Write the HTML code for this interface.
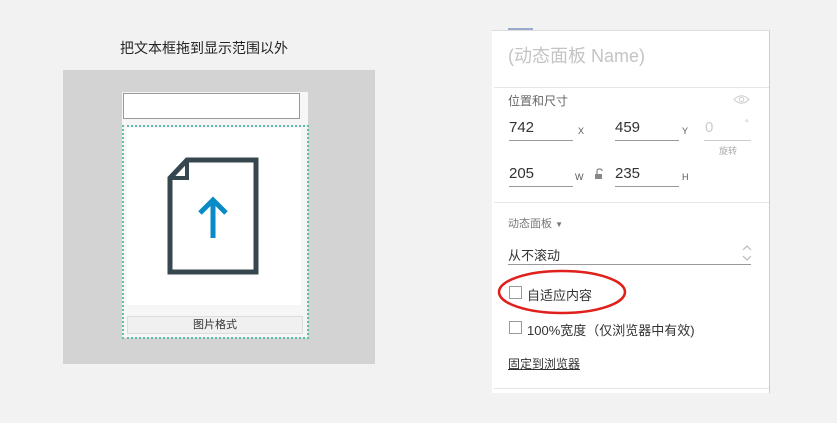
<!DOCTYPE html>
<html><head><meta charset="utf-8"><style>
body{margin:0;width:837px;height:423px;background:#f2f2f2;position:relative;overflow:hidden;font-family:"Liberation Sans","Noto Sans CJK SC",sans-serif;}
.a{position:absolute;white-space:nowrap}
.ul{position:absolute;height:1px;background:#999}
.sep{position:absolute;left:494px;width:275px;height:1px;background:#e6e6e6}
.num{font-size:15px;color:#333}
.lab{font-size:9px;color:#555}
.cb{position:absolute;width:11px;height:11px;border:1px solid #999;background:#fff}
</style></head><body>
<div class="a" style="left:120px;top:38px;font-size:14px;color:#222">把文本框拖到显示范围以外</div>
<div class="a" style="left:63px;top:70px;width:312px;height:294px;background:#d3d3d3"></div>
<div class="a" style="left:122px;top:92px;width:186px;height:246px;background:#f6f6f6"></div>
<div class="a" style="left:123px;top:93px;width:175px;height:24px;background:#fff;border:1px solid #999"></div>
<div class="a" style="left:122px;top:125px;width:183px;height:210px;border:2px dotted #5bbfae"></div>
<div class="a" style="left:127px;top:128px;width:174px;height:177px;background:#fff"></div>
<div class="a" style="left:127px;top:316px;width:174px;height:16px;background:#f0f0f0;border:1px solid #ddd;font-size:11px;color:#333;text-align:center;line-height:16px">图片格式</div>
<svg class="a" style="left:160px;top:150px" width="110" height="135">
<path d="M27 10 H96 V122 H10 V28 Z" fill="none" stroke="#37474f" stroke-width="5" stroke-linejoin="miter"/>
<path d="M27 10 V28 H10" fill="none" stroke="#37474f" stroke-width="4"/>
<path d="M53 88 V50 M40 63 L53 50 L66 63" fill="none" stroke="#0a8ac6" stroke-width="5"/>
</svg>
<div class="a" style="left:492px;top:30px;width:277px;height:362px;background:#fff;border-right:1px solid #ccc;border-top:1px solid #ddd"></div>
<div class="a" style="left:508px;top:28px;width:25px;height:2px;background:#9ac"></div>
<div class="a" style="left:508px;top:42px;font-size:18px;color:#c4c4c4">(动态面板 Name)</div>
<div class="sep" style="top:87px"></div>
<div class="a" style="left:508px;top:92px;font-size:12px;color:#666">位置和尺寸</div>
<svg class="a" style="left:733px;top:94px" width="17" height="11"><path d="M1 5.5 Q8.5 -2 16 5.5 Q8.5 13 1 5.5Z" fill="none" stroke="#ccc"/><circle cx="8.5" cy="5.5" r="2.2" fill="none" stroke="#ccc"/></svg>
<div class="a num" style="left:509px;top:119px">742</div><div class="ul" style="left:509px;top:140px;width:64px"></div><div class="a lab" style="left:578px;top:126px">X</div>
<div class="a num" style="left:615px;top:119px">459</div><div class="ul" style="left:615px;top:140px;width:64px"></div><div class="a lab" style="left:682px;top:126px">Y</div>
<div class="a num" style="left:705px;top:119px;color:#ccc">0</div><div class="ul" style="left:704px;top:140px;width:47px;background:#ccc"></div><div class="a" style="left:745px;top:118px;font-size:9px;color:#bbb">°</div>
<div class="a" style="left:719px;top:144px;font-size:9px;color:#aaa">旋转</div>
<div class="a num" style="left:509px;top:165px">205</div><div class="ul" style="left:509px;top:186px;width:64px"></div><div class="a lab" style="left:575px;top:172px">W</div>
<svg class="a" style="left:594px;top:168px" width="10" height="12"><path d="M3 6 V3 Q3 1 5.5 1 Q8 1 8 3" fill="none" stroke="#888" stroke-width="1.3"/><rect x="1" y="6" width="7" height="5" fill="#888"/></svg>
<div class="a num" style="left:615px;top:165px">235</div><div class="ul" style="left:615px;top:186px;width:64px"></div><div class="a lab" style="left:682px;top:172px">H</div>
<div class="sep" style="top:202px"></div>
<div class="a" style="left:508px;top:215px;font-size:11px;color:#777">动态面板 <span style="font-size:8px">▼</span></div>
<div class="a" style="left:508px;top:245px;font-size:13px;color:#333">从不滚动</div>
<div class="ul" style="left:508px;top:264px;width:243px;background:#999"></div>
<svg class="a" style="left:742px;top:245px" width="10" height="16"><path d="M1 5 L5 1 L9 5 M1 11 L5 15 L9 11" fill="none" stroke="#bbb" stroke-width="1.2"/></svg>
<div class="cb" style="left:509px;top:286px"></div>
<div class="a" style="left:527px;top:285px;font-size:13px;color:#333">自适应内容</div>
<div class="cb" style="left:509px;top:321px"></div>
<div class="a" style="left:527px;top:320px;font-size:13px;color:#333">100%宽度（仅浏览器中有效)</div>
<div class="a" style="left:508px;top:355px;font-size:12px;color:#333;text-decoration:underline">固定到浏览器</div>
<div class="sep" style="top:388px"></div>
<svg class="a" style="left:495px;top:267px" width="135" height="50"><ellipse cx="67" cy="25" rx="63" ry="21" fill="none" stroke="#e0201a" stroke-width="2.5"/></svg>
</body></html>
